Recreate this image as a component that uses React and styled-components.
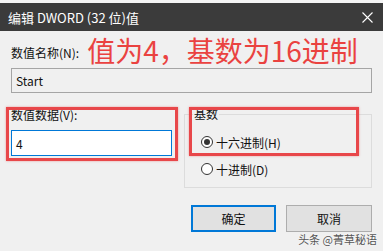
import styled, { createGlobalStyle } from "styled-components";

const GlobalStyle = createGlobalStyle`
  html, body {
    margin: 0;
    padding: 0;
    background: #f0f0f0;
  }
  * {
    box-sizing: border-box;
  }
`;

const font = `"Noto Sans CJK SC", "Noto Sans", sans-serif`;
const red = "#e8474a";

const Window = styled.div`
  position: relative;
  width: 383px;
  height: 251px;
  overflow: hidden;
  background: #f0f0f0;
  font-family: ${font};
  font-size: 12px;
  color: #111;
`;

const TopStrip = styled.div`
  height: 3px;
  background: #f4f4f4;
`;

const TitleBar = styled.div`
  height: 28px;
  display: flex;
  align-items: center;
  justify-content: space-between;
  padding: 0 10px 0 8px;
  background: #3b3b3b;
  color: #fff;
  font-size: 13px;
`;

const Body = styled.div`
  padding: 0 11px;
`;

const HeaderRow = styled.div`
  display: flex;
  align-items: flex-end;
  height: 30px;
  margin-top: 4px;
`;

const Label = styled.div`
  line-height: 14px;
  height: 14px;
  white-space: nowrap;
  margin-bottom: ${(p) => p.$mb || 0}px;
`;

const Annotation = styled.div`
  margin-left: 8px;
  align-self: center;
  font-size: 28px;
  line-height: 28px;
  color: #ea4240;
  white-space: nowrap;
`;

const TextBox = styled.div`
  height: ${(p) => p.$h}px;
  margin-top: ${(p) => p.$mt}px;
  display: flex;
  align-items: center;
  padding-left: 4px;
  border: 1px solid ${(p) => (p.$active ? "#0078d7" : "#a5a5a5")};
  background: ${(p) => (p.$active ? "#fff" : "#f0f0f0")};
  font-size: 12px;
`;

const Section = styled.div`
  display: flex;
  margin-top: 14px;
`;

const LeftCol = styled.div`
  position: relative;
  width: 161px;
  padding-top: 1px;
`;

const RightCol = styled.div`
  position: relative;
  margin-left: 12px;
  width: 188px;
`;

const Group = styled.fieldset`
  margin: 0;
  padding: 0 0 0 16px;
  height: 81px;
  border: 1px solid #dcdcdc;
  min-width: 0;
`;

const Legend = styled.legend`
  margin-left: -8px;
  padding: 0 1px;
  line-height: 14px;
  font-size: 12px;
`;

const RadioRow = styled.div`
  display: flex;
  align-items: center;
  height: 14px;
  margin-top: ${(p) => p.$mt}px;
`;

const RadioCircle = styled.span`
  width: 12px;
  height: 12px;
  border-radius: 50%;
  border: 1px solid #333;
  background: #fff;
  margin-right: 3px;
  flex: none;
  display: flex;
  align-items: center;
  justify-content: center;
  &::after {
    content: "";
    display: ${(p) => (p.$checked ? "block" : "none")};
    width: 6px;
    height: 6px;
    border-radius: 50%;
    background: #333;
  }
`;

const RedBox = styled.div`
  position: absolute;
  left: ${(p) => p.$l}px;
  top: ${(p) => p.$t}px;
  width: ${(p) => p.$w}px;
  height: ${(p) => p.$h}px;
  border: 3px solid ${red};
  box-shadow: 0 0 2px rgba(232, 71, 74, 0.5);
  pointer-events: none;
`;

const ButtonRow = styled.div`
  display: flex;
  justify-content: flex-end;
  gap: 10px;
  margin-top: 17px;
`;

const Button = styled.div`
  width: ${(p) => (p.$primary ? 85 : 86)}px;
  height: 27px;
  display: flex;
  align-items: center;
  justify-content: center;
  background: #e1e1e1;
  border: ${(p) => (p.$primary ? "2px solid #0078d7" : "1px solid #adadad")};
  font-size: 12px;
`;

const Watermark = styled.div`
  position: absolute;
  right: 6px;
  bottom: 4px;
  font-size: 11px;
  color: #555;
  text-shadow: 0 0 2px #fff;
  white-space: nowrap;
`;

function CloseIcon() {
  return (
    <svg width="11" height="11" viewBox="0 0 11 11">
      <path d="M0.5 0.5 L10.5 10.5 M10.5 0.5 L0.5 10.5" stroke="#fff" strokeWidth="1.1" />
    </svg>
  );
}

export default function App() {
  return (
    <>
      <GlobalStyle />
      <Window>
        <TopStrip />
        <TitleBar>
          <span>编辑 DWORD (32 位)值</span>
          <CloseIcon />
        </TitleBar>
        <Body>
          <HeaderRow>
            <Label $mb={5}>数值名称(N):</Label>
            <Annotation>值为4，基数为16进制</Annotation>
          </HeaderRow>
          <TextBox $h={25} $mt={3}>Start</TextBox>
          <Section>
            <LeftCol>
              <Label>数值数据(V):</Label>
              <TextBox $h={26} $mt={8} $active>4</TextBox>
              <RedBox $l={-5} $t={0} $w={172} $h={54} />
            </LeftCol>
            <RightCol>
              <Group>
                <Legend>基数</Legend>
                <RadioRow $mt={14}>
                  <RadioCircle $checked />
                  十六进制(H)
                </RadioRow>
                <RadioRow $mt={13}>
                  <RadioCircle />
                  十进制(D)
                </RadioRow>
              </Group>
              <RedBox $l={5} $t={0} $w={170} $h={49} />
            </RightCol>
          </Section>
          <ButtonRow>
            <Button $primary>确定</Button>
            <Button>取消</Button>
          </ButtonRow>
        </Body>
        <Watermark>头条 @菁草秘语</Watermark>
      </Window>
    </>
  );
}
